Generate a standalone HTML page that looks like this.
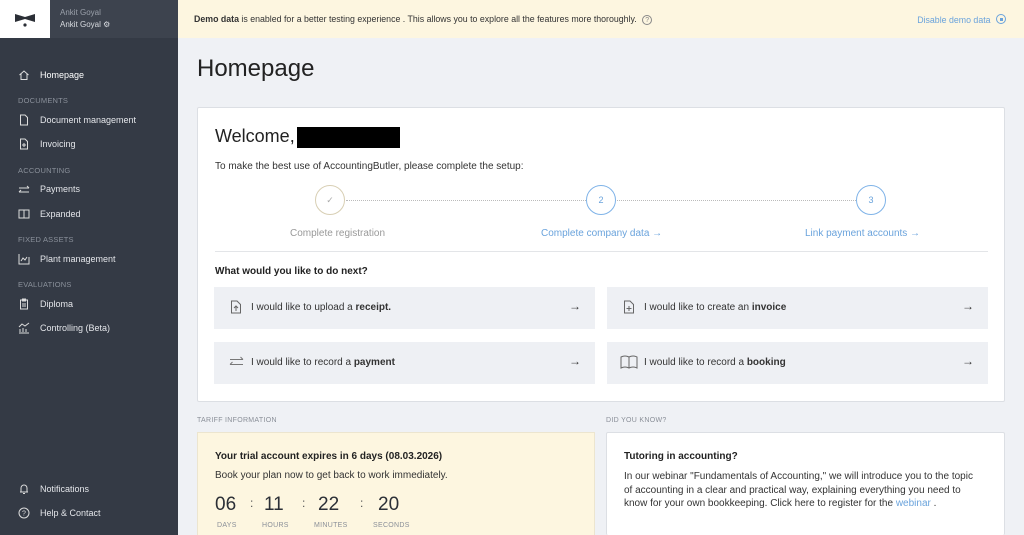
<!DOCTYPE html>
<html style="overflow:hidden"><head><meta charset="utf-8"><style>
*{box-sizing:border-box;margin:0;padding:0}
html,body{width:1024px;height:535px;overflow:hidden}
body{font-family:"Liberation Sans",sans-serif;background:#eff1f5;position:relative;color:#2b2f36}
.sb{position:absolute;left:0;top:0;width:178px;height:535px;background:#343a45}
.sbtop{position:absolute;left:0;top:0;width:178px;height:38px;background:#3d434e}
.logo{position:absolute;left:0;top:0;width:50px;height:38px;background:#fff}
.user{position:absolute;left:60px;font-size:8px;color:#9aa0aa}
.nav{position:absolute;left:40px;font-size:9px;color:#e4e6ea}
.sec{position:absolute;left:18px;font-size:7.5px;color:#8a909a;letter-spacing:.2px}
.ic{position:absolute;left:18px;width:12px;height:12px}
.banner{position:absolute;left:178px;top:0;width:846px;height:38px;background:#fdf6e0;font-size:8.8px;color:#333}
.card{position:absolute;background:#fff;border:1px solid #dcdfe4;border-radius:2px;overflow:hidden}
.tile{position:absolute;height:42px;background:#eef0f4;font-size:10px;color:#333}
.tile span.t{position:absolute;left:37px;top:15px}
.tile .ar{position:absolute;right:14px;top:12px;font-size:12px}
.circ{position:absolute;width:30px;height:30px;border-radius:50%;border:1px solid #7fb3e8;color:#6aa3dc;font-size:9px;text-align:center;line-height:28px;background:#fff}
.lbl{position:absolute;font-size:10px;color:#6aa3dc}
.small{position:absolute;font-size:7px;color:#8a8f98;letter-spacing:.3px}
</style></head><body>
<div class="sb"></div>
<div class="sbtop"></div>
<div class="logo"><svg width="50" height="38"><path d="M15 14 L25 17 L35 14 L35 22 L25 19 L15 22Z" fill="#2b2f36"/><circle cx="25" cy="25" r="1.6" fill="#2b2f36"/></svg></div>
<div class="user" style="top:8px">Ankit Goyal</div>
<div class="user" style="top:20px;color:#d8dbe0">Ankit Goyal ⚙</div>

<svg class="ic" style="top:69px" viewBox="0 0 12 12"><path d="M1.5 6 L6 2 L10.5 6 M3 5 V10.5 H9 V5" stroke="#ddd" fill="none"/></svg>
<div class="nav" style="top:70px;color:#fff">Homepage</div>
<div class="sec" style="top:96px">DOCUMENTS</div>
<svg class="ic" style="top:114px" viewBox="0 0 12 12"><path d="M2.5 1 H7 L9.5 3.5 V11 H2.5Z" stroke="#ddd" fill="none"/></svg>
<div class="nav" style="top:115px">Document management</div>
<svg class="ic" style="top:138px" viewBox="0 0 12 12"><path d="M2.5 1 H7 L9.5 3.5 V11 H2.5Z M6 5 V9 M4 7 H8" stroke="#ddd" fill="none"/></svg>
<div class="nav" style="top:139px">Invoicing</div>
<div class="sec" style="top:166px">ACCOUNTING</div>
<svg class="ic" style="top:184px" viewBox="0 0 12 12"><path d="M1 4 H11 M9 2 L11 4 M11 8 H1 M3 6 L1 8" stroke="#ddd" fill="none"/></svg>
<div class="nav" style="top:184px">Payments</div>
<svg class="ic" style="top:208px" viewBox="0 0 12 12"><path d="M1 2 H11 V10 H1Z M6 2 V10" stroke="#ddd" fill="none"/></svg>
<div class="nav" style="top:209px">Expanded</div>
<div class="sec" style="top:235px">FIXED ASSETS</div>
<svg class="ic" style="top:253px" viewBox="0 0 12 12"><path d="M1 1 V11 H11 V4 M3 8 L5 5 L7 7 L9 4" stroke="#ddd" fill="none"/></svg>
<div class="nav" style="top:254px">Plant management</div>
<div class="sec" style="top:280px">EVALUATIONS</div>
<svg class="ic" style="top:298px" viewBox="0 0 12 12"><path d="M2.5 2 H9.5 V11 H2.5Z M4.5 1 H7.5 V3 H4.5Z M4 6 H8 M4 8 H8" stroke="#ddd" fill="none"/></svg>
<div class="nav" style="top:299px">Diploma</div>
<svg class="ic" style="top:322px" viewBox="0 0 12 12"><path d="M1 11 H11 M2 10 V7 M5 10 V6 M8 10 V7 M1 5 L4 2 L7 4 L11 1" stroke="#ddd" fill="none"/></svg>
<div class="nav" style="top:323px">Controlling (Beta)</div>
<svg class="ic" style="top:483px" viewBox="0 0 12 12"><path d="M3 9 V5 A3 3 0 0 1 9 5 V9 H2 H10 M5 10.5 H7" stroke="#ddd" fill="none"/></svg>
<div class="nav" style="top:484px">Notifications</div>
<svg class="ic" style="top:507px" viewBox="0 0 12 12"><circle cx="6" cy="6" r="5" stroke="#ddd" fill="none"/><text x="6" y="8.5" font-size="7" fill="#ddd" text-anchor="middle">?</text></svg>
<div class="nav" style="top:508px">Help &amp; Contact</div>

<div class="banner"><span style="position:absolute;left:16px;top:14px"><b>Demo data</b> is enabled for a better testing experience . This allows you to explore all the features more thoroughly. <span style="color:#888;border:1px solid #888;border-radius:50%;display:inline-block;width:10px;height:10px;font-size:7px;text-align:center;line-height:9px;margin-left:3px">?</span></span>
<span style="position:absolute;right:18px;top:14px;color:#6aa3dc">Disable demo data <span style="display:inline-block;width:10px;height:10px;border:1px solid #6aa3dc;border-radius:50%;vertical-align:-1px;margin-left:3px;position:relative"><span style="position:absolute;left:2.5px;top:2.5px;width:3px;height:3px;background:#6aa3dc"></span></span></span></div>

<div style="position:absolute;left:197px;top:55px;font-size:24px;color:#222">Homepage</div>

<div class="card" style="left:197px;top:107px;width:808px;height:295px">
<div style="position:absolute;left:17px;top:18px;font-size:18px;color:#222">Welcome,</div>
<div style="position:absolute;left:99px;top:19px;width:103px;height:21px;background:#000"></div>
<div style="position:absolute;left:17px;top:53px;font-size:10px;color:#333">To make the best use of AccountingButler, please complete the setup:</div>
<div style="position:absolute;left:148px;top:92px;width:520px;border-top:1px dotted #bbb"></div>
<div class="circ" style="left:117px;top:77px;border-color:#d8cfb4;color:#aaa">✓</div>
<div class="circ" style="left:388px;top:77px">2</div>
<div class="circ" style="left:658px;top:77px">3</div>
<div class="lbl" style="left:92px;top:120px;color:#999">Complete registration</div>
<div class="lbl" style="left:343px;top:120px">Complete company data →</div>
<div class="lbl" style="left:607px;top:120px">Link payment accounts →</div>
<div style="position:absolute;left:17px;top:143px;width:773px;border-top:1px solid #e3e5e8"></div>
<div style="position:absolute;left:17px;top:158px;font-size:10px;font-weight:bold;color:#222">What would you like to do next?</div>
</div>

<div class="tile" style="left:214px;top:287px;width:381px"><svg style="position:absolute;left:16px;top:13px" width="12" height="14"><path d="M1.5 1 H7 L10.5 4.5 V13 H1.5Z M6 11 V6 M4 8 L6 6 L8 8" stroke="#666" fill="none"/></svg><span class="t">I would like to upload a <b>receipt.</b></span><span class="ar">→</span></div>
<div class="tile" style="left:607px;top:287px;width:381px"><svg style="position:absolute;left:16px;top:13px" width="12" height="14"><path d="M1.5 1 H7 L10.5 4.5 V13 H1.5Z M6 6 V11 M3.5 8.5 H8.5" stroke="#666" fill="none"/></svg><span class="t">I would like to create an <b>invoice</b></span><span class="ar">→</span></div>
<div class="tile" style="left:214px;top:342px;width:381px"><svg style="position:absolute;left:15px;top:14px" width="15" height="12"><path d="M1 3.5 H14 M11.5 1 L14 3.5 M14 8.5 H1 M3.5 6 L1 8.5" stroke="#777" fill="none"/></svg><span class="t">I would like to record a <b>payment</b></span><span class="ar">→</span></div>
<div class="tile" style="left:607px;top:342px;width:381px"><svg style="position:absolute;left:13px;top:13px" width="18" height="14"><path d="M1 2 Q5 0 9 2 Q13 0 17 2 V13 Q13 11 9 13 Q5 11 1 13Z M9 2 V13" stroke="#666" fill="none"/></svg><span class="t">I would like to record a <b>booking</b></span><span class="ar">→</span></div>

<div class="small" style="left:197px;top:417px">TARIFF INFORMATION</div>
<div class="small" style="left:606px;top:417px">DID YOU KNOW?</div>
<div style="position:absolute;left:197px;top:432px;width:398px;height:103px;background:#fdf6e0;border:1px solid #ece5cf;border-bottom:none">
<div style="position:absolute;left:17px;top:18px;font-size:10px;font-weight:bold;color:#222">Your trial account expires in 6 days (08.03.2026)</div>
<div style="position:absolute;left:17px;top:37px;font-size:10px;color:#333">Book your plan now to get back to work immediately.</div>
<div style="position:absolute;left:17px;top:61px;font-size:19px;color:#2b2f36">06</div>
<div style="position:absolute;left:52px;top:63px;font-size:12px;color:#555">:</div>
<div style="position:absolute;left:66px;top:61px;font-size:19px;color:#2b2f36">11</div>
<div style="position:absolute;left:104px;top:63px;font-size:12px;color:#555">:</div>
<div style="position:absolute;left:120px;top:61px;font-size:19px;color:#2b2f36">22</div>
<div style="position:absolute;left:162px;top:63px;font-size:12px;color:#555">:</div>
<div style="position:absolute;left:180px;top:61px;font-size:19px;color:#2b2f36">20</div>
<div class="small" style="left:19px;top:89px">DAYS</div>
<div class="small" style="left:64px;top:89px">HOURS</div>
<div class="small" style="left:116px;top:89px">MINUTES</div>
<div class="small" style="left:175px;top:89px">SECONDS</div>
</div>
<div class="card" style="left:606px;top:432px;width:399px;height:103px;border-bottom:none">
<div style="position:absolute;left:17px;top:18px;font-size:10px;font-weight:bold;color:#222">Tutoring in accounting?</div>
<div style="position:absolute;left:17px;top:37px;width:350px;font-size:10px;line-height:13.5px;color:#333">In our webinar "Fundamentals of Accounting," we will introduce you to the topic of accounting in a clear and practical way, explaining everything you need to know for your own bookkeeping. Click here to register for the <span style="color:#6aa3dc">webinar</span> .</div>
</div>
</body></html>
